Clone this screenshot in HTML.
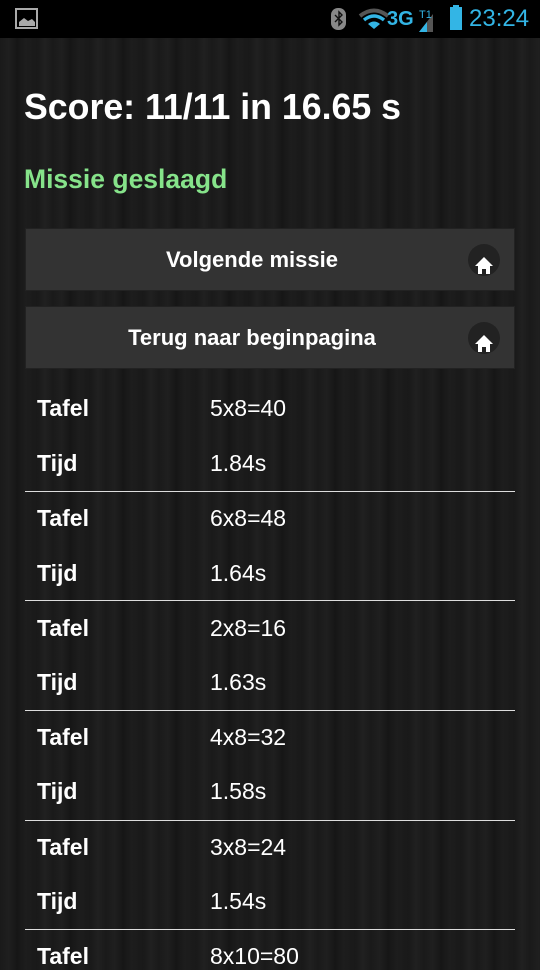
<!DOCTYPE html>
<html><head><meta charset="utf-8"><style>
*{margin:0;padding:0;box-sizing:border-box}
body{width:540px;height:960px;overflow:hidden;font-family:"Liberation Sans",sans-serif;color:#fff;
background:#1b1b1b repeating-linear-gradient(90deg,#1a1a1a 0,#1f1f1f 9px,#161616 17px,#1d1d1d 26px,#191919 37px,#202020 45px,#1a1a1a 53px);position:relative}
.sb{position:absolute;left:0;top:0;width:540px;height:38px;background:#000}
.t{position:absolute;white-space:nowrap}
.btn{position:absolute;left:25px;width:490px;height:63px;background:#333;border:1px solid #222;font-weight:bold;font-size:22px;text-align:center;line-height:61px;padding-right:36px}
.ic{position:absolute;right:14px;top:15px;width:32px;height:32px;border-radius:50%;background:#222}
.line{position:absolute;left:25px;width:490px;height:1px;background:#ddd}
.l{position:absolute;left:37px;font-weight:bold;font-size:23px}
.v{position:absolute;left:210px;font-size:23px}
</style></head><body>
<div class="sb">
<svg class="t" style="left:15px;top:8px" width="24" height="22"><rect x="1" y="1" width="21" height="19" fill="none" stroke="#aaa" stroke-width="2"/><path d="M4 18 L4 14 L9 10 L13 13 L17 11 L20 14 L20 18Z" fill="#aaa"/></svg>
<svg class="t" style="left:330px;top:7px" width="18" height="24"><rect x="1" y="1" width="15" height="22" rx="7" fill="#888"/><path d="M5 8 L12 15 L9 18 L9 5 L12 8 L5 15" stroke="#111" stroke-width="1.4" fill="none"/></svg>
<svg class="t" style="left:358px;top:8px" width="32" height="22"><path d="M2 8 Q16 -3 30 8" stroke="#555" stroke-width="4" fill="none"/><path d="M6 12 Q16 4 26 12" stroke="#33b5e5" stroke-width="3.5" fill="none"/><path d="M10 16 Q16 11 22 16 L16 21Z" fill="#33b5e5"/></svg>
<div class="t" style="left:387px;top:8px;font-size:20px;font-weight:bold;color:#33b5e5">3G</div>
<svg class="t" style="left:405px;top:6px" width="40" height="26"><path d="M14 26 L28 8 L28 26Z" fill="#555"/><path d="M14 26 L22 16 L22 26Z" fill="#33b5e5"/><text x="14" y="12" font-size="11" fill="#33b5e5" font-family="Liberation Sans">T1</text></svg>
<div class="t" style="left:450px;top:7px;width:12px;height:23px;background:#33b5e5"></div>
<div class="t" style="left:453px;top:5px;width:6px;height:3px;background:#33b5e5"></div>
<div class="t" style="left:469px;top:5px;font-size:24px;color:#33b5e5">23:24</div>
</div>
<div class="t" style="left:24px;top:87px;font-size:35.7px;font-weight:bold">Score: 11/11 in 16.65 s</div>
<div class="t" style="left:24px;top:164px;font-size:26.5px;font-weight:bold;color:#86e38a">Missie geslaagd</div>
<div class="btn" style="top:228px">Volgende missie<div class="ic"><svg width="32" height="32"><path d="M16 7 L25 16 L22 16 L22 24 L18 24 L18 19 L14 19 L14 24 L10 24 L10 16 L7 16Z" fill="#fff"/></svg></div></div>
<div class="btn" style="top:306px">Terug naar beginpagina<div class="ic"><svg width="32" height="32"><path d="M16 7 L25 16 L22 16 L22 24 L18 24 L18 19 L14 19 L14 24 L10 24 L10 16 L7 16Z" fill="#fff"/></svg></div></div>

<div class="l" style="top:395px">Tafel</div><div class="v" style="top:395px">5x8=40</div>
<div class="l" style="top:450px">Tijd</div><div class="v" style="top:450px">1.84s</div>
<div class="line" style="top:491px"></div>
<div class="l" style="top:505px">Tafel</div><div class="v" style="top:505px">6x8=48</div>
<div class="l" style="top:560px">Tijd</div><div class="v" style="top:560px">1.64s</div>
<div class="line" style="top:600px"></div>
<div class="l" style="top:615px">Tafel</div><div class="v" style="top:615px">2x8=16</div>
<div class="l" style="top:669px">Tijd</div><div class="v" style="top:669px">1.63s</div>
<div class="line" style="top:710px"></div>
<div class="l" style="top:724px">Tafel</div><div class="v" style="top:724px">4x8=32</div>
<div class="l" style="top:778px">Tijd</div><div class="v" style="top:778px">1.58s</div>
<div class="line" style="top:820px"></div>
<div class="l" style="top:834px">Tafel</div><div class="v" style="top:834px">3x8=24</div>
<div class="l" style="top:888px">Tijd</div><div class="v" style="top:888px">1.54s</div>
<div class="line" style="top:929px"></div>
<div class="l" style="top:943px">Tafel</div><div class="v" style="top:943px">8x10=80</div>
</body></html>
